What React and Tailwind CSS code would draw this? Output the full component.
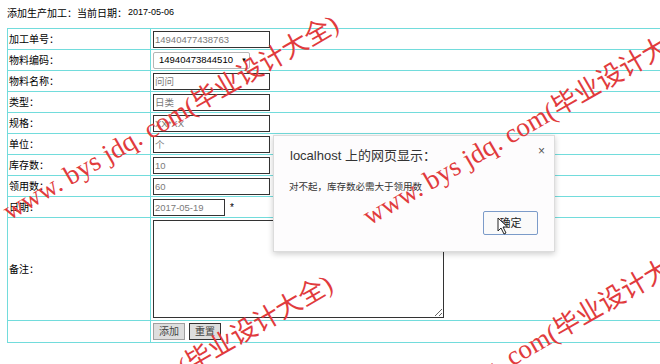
import React from 'react'

const rows = [
  { label: '加工单号：', value: '14940477438763' },
  { label: '物料编码：', select: '14940473844510' },
  { label: '物料名称：', value: '问问' },
  { label: '类型：', value: '日类' },
  { label: '规格：', value: 'XX*XX' },
  { label: '单位：', value: '个' },
  { label: '库存数：', value: '10' },
  { label: '领用数：', value: '60' },
  { label: '日期：', date: '2017-05-19' },
]

const cell = 'border border-[#72dcdc] p-0 align-middle'
const wmFont = { fontFamily: '"Liberation Serif", "Noto Sans CJK SC", serif' }

// watermark copies: pivot point (bottom-left of each line)
const marks = [
  { x: 12, y: 226 },
  { x: 372, y: 231 },
  { x: 6, y: 486 },
  { x: 374, y: 453 },
]

function Watermark({ x, y }) {
  return (
    <div
      className="absolute whitespace-nowrap text-[27px] leading-none text-[#e13b3d] origin-bottom-left -rotate-[30deg] pointer-events-none"
      style={{ ...wmFont, left: x, top: y - 28 }}
    >
      www. bys jdq. com<span className="text-[26px]">(毕业设计大全)</span>
    </div>
  )
}

export default function App() {
  return (
    <div
      className="relative w-[660px] h-[364px] overflow-hidden bg-white text-[10px] text-black"
      style={{ fontFamily: '"Liberation Sans", "Noto Sans CJK SC", sans-serif' }}
    >
      <div className="h-[28px] pl-[7px] flex items-center pb-[2px]">
        <span>添加生产加工：</span>
        <span>当前日期：</span>
        <span className="ml-[1px] text-[9px]">2017-05-06</span>
      </div>

      <table className="ml-[7px] w-[700px] border-collapse">
        <tbody>
          {rows.map((r) => (
            <tr key={r.label}>
              <td className={`${cell} w-[143px] h-[21px] pl-[1px]`}>{r.label}</td>
              <td className={`${cell} h-[21px] pl-[2px]`}>
                {r.value !== undefined && (
                  <input
                    readOnly
                    defaultValue={r.value}
                    className="block w-[117px] h-[17px] border border-[#333] px-[1px] text-[9.5px] text-[#7a7a7a] outline-none"
                  />
                )}
                {r.select && (
                  <div className="w-[97px] h-[17px] border border-[#b5b5b5] rounded-[2px] bg-white flex items-center pl-[5px] text-[9.5px]">
                    <span>{r.select}</span>
                    <span className="ml-[8px] text-[6px]">▼</span>
                  </div>
                )}
                {r.date && (
                  <div className="flex items-center">
                    <input
                      readOnly
                      defaultValue={r.date}
                      className="block w-[72px] h-[17px] border border-[#333] px-[1px] text-[9.5px] text-[#7a7a7a] outline-none"
                    />
                    <span className="ml-[5px]">*</span>
                  </div>
                )}
              </td>
            </tr>
          ))}
          <tr>
            <td className={`${cell} h-[103px] pl-[1px]`}>备注：</td>
            <td className={`${cell} pl-[2px] py-[2px]`}>
              <textarea className="block w-[291px] h-[98px] border border-[#333] outline-none" />
            </td>
          </tr>
          <tr>
            <td className={`${cell} h-[22px]`}></td>
            <td className={`${cell} pl-[2px]`}>
              <div className="flex items-center gap-[4px]">
                <button className="w-[32px] h-[17px] bg-[#dedede] border border-[#a0a0a0] text-[10px] text-[#444] leading-none">添加</button>
                <button className="w-[32px] h-[17px] bg-[#dedede] border border-[#333] text-[10px] text-[#444] leading-none">重置</button>
              </div>
            </td>
          </tr>
        </tbody>
      </table>

      {/* alert dialog */}
      <div className="absolute left-[273px] top-[135px] w-[282px] h-[117px] bg-[#fdfcfd] border border-[#dcdcdc] shadow-[0_2px_6px_rgba(0,0,0,0.2)]">
        <div className="absolute left-[16px] top-[10px] text-[13px] text-[#333]">localhost 上的网页显示：</div>
        <div className="absolute right-[9px] top-[6px] text-[12px] text-[#555]">×</div>
        <div className="absolute left-[15px] top-[44px] text-[9.5px] text-[#333]">对不起，库存数必需大于领用数</div>
        <div className="absolute left-[209px] top-[75px] w-[55px] h-[24px] rounded-[2px] border border-[#7b9bc9] bg-[#fafafa] flex items-center justify-center text-[11px] text-[#222]">
          确定
        </div>
        <svg className="absolute left-[223px] top-[81px]" width="12" height="18" viewBox="0 0 12 18">
          <path d="M1 1 L1 14 L4 11 L7 17 L9 16 L6 10 L10.5 10 Z" fill="#fff" stroke="#222" strokeWidth="1" />
        </svg>
      </div>

      {marks.map((m, i) => (
        <Watermark key={i} x={m.x} y={m.y} />
      ))}
    </div>
  )
}
